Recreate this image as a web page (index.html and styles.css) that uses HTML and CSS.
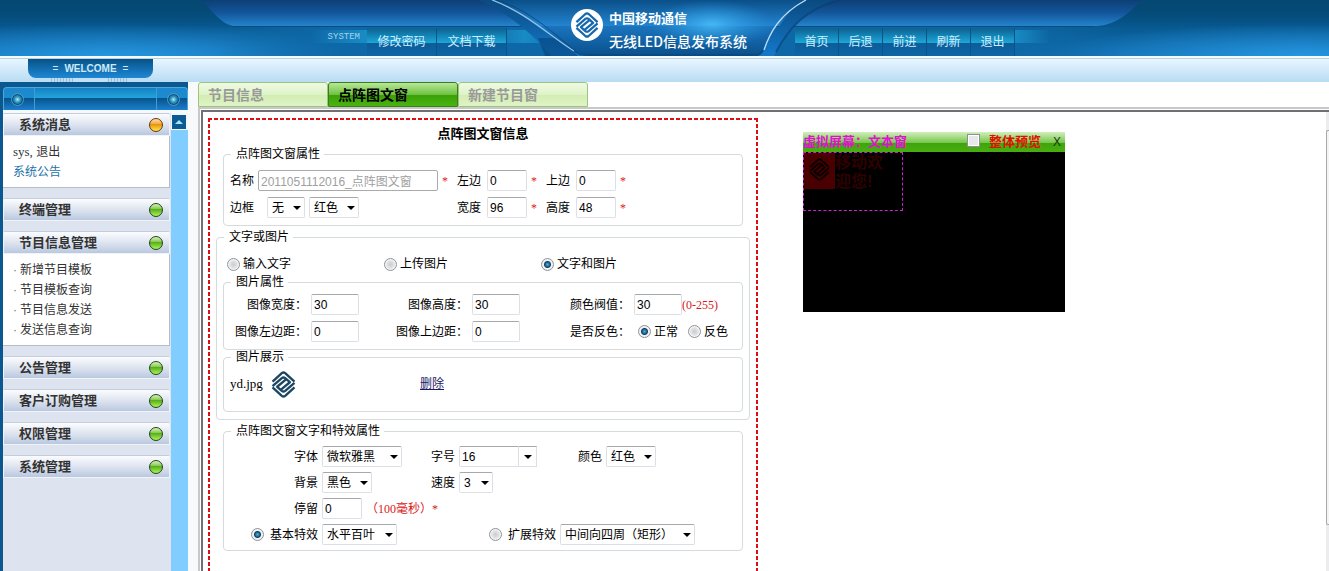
FILE: index.html
```html
<!DOCTYPE html>
<html lang="zh-CN">
<head>
<meta charset="utf-8">
<title>无线LED信息发布系统</title>
<link rel="stylesheet" href="styles.css">
</head>
<body>
<svg class="defs" aria-hidden="true">
  <symbol id="knot" viewBox="0 0 32 32">
    <g fill="none" stroke="currentColor" stroke-width="2.8" stroke-linejoin="round">
      <path d="M3 12.500 L14 2.500 Q16 1 18 2.500 L29 12.500"/>
      <path d="M3 18 L14 8.500 Q16 7 18 8.500 L23.500 13.300 L13 22"/>
      <path d="M29 19.500 L18 29.500 Q16 31 14 29.500 L3 19.500"/>
      <path d="M29 14 L18 23.500 Q16 25 14 23.500 L8.500 18.700 L19 10"/>
    </g>
  </symbol>
</svg>

<header class="top">
  <svg class="top-art" viewBox="0 0 1329 56" aria-hidden="true">
    <defs>
      <linearGradient id="wing" x1="0" y1="0" x2="0" y2="1">
        <stop offset="0" stop-color="#0d3f75"/><stop offset=".5" stop-color="#13569b"/><stop offset="1" stop-color="#2484cc"/>
      </linearGradient>
      <linearGradient id="shade" x1="0" y1="0" x2="0" y2="1">
        <stop offset="0" stop-color="#0a4a80"/><stop offset="1" stop-color="#1479cb"/>
      </linearGradient>
      <linearGradient id="plate" x1="0" y1="0" x2="0" y2="1">
        <stop offset="0" stop-color="#0a4f88"/><stop offset=".46" stop-color="#2384d0"/><stop offset=".47" stop-color="#1a74bd"/><stop offset="1" stop-color="#09508c"/>
      </linearGradient>
      <radialGradient id="glow"><stop offset="0" stop-color="#4cc4ff" stop-opacity=".8"/><stop offset="1" stop-color="#2a9be8" stop-opacity="0"/></radialGradient>
      <linearGradient id="rail" x1="0" y1="0" x2="1" y2="0">
        <stop offset="0" stop-color="#0e6ca8" stop-opacity="0"/><stop offset=".15" stop-color="#0e68a8"/><stop offset=".85" stop-color="#0e68a8"/><stop offset="1" stop-color="#0e6ca8" stop-opacity="0"/>
      </linearGradient>
      <linearGradient id="fade" x1="0" y1="0" x2="1" y2="0">
        <stop offset="0" stop-color="#1fa3d6" stop-opacity="0"/><stop offset=".5" stop-color="#1fa3d6" stop-opacity=".6"/><stop offset="1" stop-color="#1fa3d6" stop-opacity="0"/>
      </linearGradient>
    </defs>
    <rect x="210" y="27" width="910" height="29" fill="url(#rail)"/>
    <path d="M203 0 C213 13 222 24 233 26 H1094 C1112 26 1124 18 1142 0 Z" fill="url(#wing)"/>
    <path d="M233 26.500 H1094" stroke="#0b4b80"/>
    <rect x="310" y="30" width="110" height="13" fill="url(#fade)"/>
    <rect x="480" y="30" width="90" height="13" fill="url(#fade)"/>
    <rect x="980" y="30" width="70" height="13" fill="url(#fade)"/>
    <path d="M478 0 C510 14 530 32 552 56 H590 L500 0 Z" fill="url(#shade)"/>
    <path d="M838 0 C806 10 790 26 774 56 H755 L800 0 Z" fill="url(#shade)"/>
    <path d="M538 38 L560 38 L578 56 H545 Z" fill="#06427a" opacity=".6"/>
    <path d="M492 0 C525 12 550 36 572 50 Q578 56 590 56 H756 Q762 56 764 50 C770 32 780 14 806 0 Z" fill="url(#plate)"/>
    <ellipse cx="712" cy="24" rx="62" ry="24" fill="url(#glow)"/>
    <path d="M492 0 C525 12 550 36 574 51" fill="none" stroke="#8fc4ec" stroke-width="1.300"/>
    <path d="M496 0 C530 10 552 32 580 55 H758 L763 50" fill="none" stroke="#083e70" stroke-opacity=".7"/>
    <path d="M764 50 C770 32 780 14 806 0" fill="none" stroke="#b5dcf7" stroke-width="1.300"/>
    <path d="M838 0 C806 10 790 26 776 52" fill="none" stroke="#0a3e70" stroke-opacity=".6" stroke-width="2"/>
  </svg>
  <nav class="nav nav-left">
    <span class="nav-tag">SYSTEM</span>
    <a class="nav-link wide" href="#">修改密码</a>
    <a class="nav-link wide" href="#">文档下载</a>
  </nav>
  <div class="brand">
    <svg class="brand-logo" viewBox="0 0 32 32" aria-hidden="true"><circle cx="16" cy="16" r="16" fill="#fff"/><use href="#knot" x="3" y="3" width="26" height="26"/></svg>
    <div class="brand-text"><div class="brand-name">中国移动通信</div><div class="brand-sub">无线LED信息发布系统</div></div>
  </div>
  <nav class="nav nav-right">
    <a class="nav-link" href="#">首页</a>
    <a class="nav-link" href="#">后退</a>
    <a class="nav-link" href="#">前进</a>
    <a class="nav-link" href="#">刷新</a>
    <a class="nav-link" href="#">退出</a>
  </nav>
</header>

<div class="strip"><div class="welcome"><span>=</span><b>WELCOME</b><span>=</span></div></div>

<div class="body">
  <aside class="side">
    <div class="cap"><i class="knob"></i><i class="cap-mid"></i><i class="knob"></i></div>
    <div class="side-row">
      <div class="menu">
        <section>
          <h2 class="menu-head">系统消息<i class="led amber"></i></h2>
          <div class="menu-body"><div><span class="user">sys,</span> <a href="#">退出</a></div><div><a class="notice" href="#">系统公告</a></div></div>
        </section>
        <section><h2 class="menu-head">终端管理<i class="led"></i></h2></section>
        <section>
          <h2 class="menu-head">节目信息管理<i class="led"></i></h2>
          <ul class="menu-body dots">
            <li><a href="#">新增节目模板</a></li><li><a href="#">节目模板查询</a></li><li><a href="#">节目信息发送</a></li><li><a href="#">发送信息查询</a></li>
          </ul>
        </section>
        <section><h2 class="menu-head">公告管理<i class="led"></i></h2></section>
        <section><h2 class="menu-head">客户订购管理<i class="led"></i></h2></section>
        <section><h2 class="menu-head">权限管理<i class="led"></i></h2></section>
        <section><h2 class="menu-head">系统管理<i class="led"></i></h2></section>
      </div>
      <div class="rail"><button class="rail-up" type="button" aria-label="收起"><svg viewBox="0 0 14 14" aria-hidden="true"><path d="M3 9 L7 5 L11 9 Z" fill="#a8e4ff"/></svg></button></div>
    </div>
  </aside>

  <main class="main">
    <div class="tabs">
      <button class="tab" type="button">节目信息</button>
      <button class="tab active" type="button">点阵图文窗</button>
      <button class="tab" type="button">新建节目窗</button>
    </div>
    <div class="frame"><div class="page">
      <form class="panel">
        <h1 class="title">点阵图文窗信息</h1>

        <fieldset class="inset">
          <legend>点阵图文窗属性</legend>
          <div class="grid basics">
            <label for="name">名称</label>
            <div class="cell"><input class="box name" id="name" type="text" value="2011051112016_点阵图文窗" disabled><span class="req">*</span></div>
            <label for="left">左边</label>
            <div class="cell"><input class="box short" id="left" type="text" value="0"><span class="req">*</span></div>
            <label for="topv">上边</label>
            <div class="cell"><input class="box short" id="topv" type="text" value="0"><span class="req">*</span></div>
            <label for="border">边框</label>
            <div class="cell borders">
              <span class="pick p38"><select id="border"><option>无</option></select></span>
              <span class="pick p50"><select aria-label="边框颜色"><option>红色</option></select></span>
            </div>
            <label for="w">宽度</label>
            <div class="cell"><input class="box short" id="w" type="text" value="96"><span class="req">*</span></div>
            <label for="h">高度</label>
            <div class="cell"><input class="box short" id="h" type="text" value="48"><span class="req">*</span></div>
          </div>
        </fieldset>

        <fieldset class="outer">
          <legend>文字或图片</legend>
          <div class="modes">
            <label><input class="radio" type="radio" name="mode">输入文字</label>
            <label><input class="radio" type="radio" name="mode">上传图片</label>
            <label><input class="radio" type="radio" name="mode" checked>文字和图片</label>
          </div>
          <fieldset>
            <legend>图片属性</legend>
            <div class="grid image">
              <label for="iw">图像宽度：</label><input class="box" id="iw" type="text" value="30">
              <label for="ih">图像高度：</label><input class="box" id="ih" type="text" value="30">
              <label for="th">颜色阀值：</label>
              <div class="cell"><input class="box mid" id="th" type="text" value="30"><span class="hint">(0-255)</span></div>
              <label for="il">图像左边距：</label><input class="box" id="il" type="text" value="0">
              <label for="it">图像上边距：</label><input class="box" id="it" type="text" value="0">
              <span class="lab">是否反色：</span>
              <div class="cell invert">
                <label><input class="radio" type="radio" name="inv" checked>正常</label>
                <label><input class="radio" type="radio" name="inv">反色</label>
              </div>
            </div>
          </fieldset>
          <fieldset>
            <legend>图片展示</legend>
            <div class="shown">
              <span class="file">yd.jpg</span>
              <svg class="thumb" viewBox="0 0 32 32" aria-hidden="true"><use href="#knot"/></svg>
              <a class="del" href="#">删除</a>
            </div>
          </fieldset>
        </fieldset>

        <fieldset class="inset">
          <legend>点阵图文窗文字和特效属性</legend>
          <div class="grid effects">
            <label for="font">字体</label><span class="pick"><select id="font"><option>微软雅黑</option></select></span>
            <label for="size">字号</label><span class="combo"><input class="box" id="size" type="text" value="16"><button type="button" aria-label="选择字号"></button></span>
            <label for="color">颜色</label><span class="pick p50"><select id="color"><option>红色</option></select></span>
            <label class="first" for="bg">背景</label><span class="pick p50"><select id="bg"><option>黑色</option></select></span>
            <label for="speed">速度</label><span class="pick p34"><select id="speed"><option>3</option></select></span>
            <label class="first" for="stay">停留</label>
            <div class="stay"><input class="box short" id="stay" type="text" value="0"><span class="hint">（100毫秒）*</span></div>
          </div>
          <div class="motion">
            <label><input class="radio" type="radio" name="fx" checked>基本特效</label>
            <span class="pick p75"><select aria-label="基本特效"><option>水平百叶</option></select></span>
            <label class="ext"><input class="radio" type="radio" name="fx">扩展特效</label>
            <span class="pick p135"><select aria-label="扩展特效"><option>中间向四周（矩形）</option></select></span>
          </div>
        </fieldset>
      </form>

      <section class="preview">
        <div class="preview-bar">
          <span class="preview-title">虚拟屏幕：文本窗</span>
          <label class="whole"><input type="checkbox">整体预览</label>
          <button class="close" type="button" aria-label="关闭">X</button>
        </div>
        <div class="screen">
          <div class="sprite">
            <svg class="sprite-logo" viewBox="0 0 31 36" aria-hidden="true"><use href="#knot" x="4" y="4" width="23" height="25"/></svg>
            <p class="sprite-text">移动欢迎您!</p>
          </div>
        </div>
      </section>
      <div class="scroll"><i></i></div>
    </div></div>
  </main>
</div>
</body>
</html>
```
FILE: styles.css
```css
* { box-sizing: border-box; }
body {
  margin: 0; height: 100vh; overflow: hidden;
  display: flex; flex-direction: column;
  font: 12px/16px "Liberation Sans", "Noto Sans CJK SC", sans-serif;
  color: #000; background: #fff;
}
a { color: inherit; text-decoration: none; }
h1, h2, p, ul { margin: 0; padding: 0; list-style: none; }
.defs { position: absolute; width: 0; height: 0; }

/* Header */
.top {
  position: relative; flex: none; height: 56px;
  display: grid; grid-template-columns: 1fr 187px 1fr;
  background:
    linear-gradient(#054873, transparent 50%),
    radial-gradient(ellipse 280px 32px at 8% 100%, #2596e0, transparent),
    radial-gradient(ellipse 260px 32px at 98% 100%, #2596e0, transparent),
    linear-gradient(#044672, #07588f 45%, #126caf);
}
.top-art { position: absolute; left: 0; top: 0; width: 100%; height: 56px; }
.nav { position: relative; display: flex; align-items: flex-end; color: #cdeeff; }
.nav-left { justify-content: flex-end; padding-right: 64px; }
.nav-right { padding-left: 37px; }
.nav-tag { font: 9px/12px "Liberation Mono", monospace; color: #a4d3ee; padding: 0 7px 13px 0; }
.nav-link {
  width: 44px; height: 28px; line-height: 28px; text-align: center;
  background: linear-gradient(#0d5f92, #1ba8d8 15px, #0d5c98 15px, #0d66a6);
  border-right: 1px solid #0b5388;
}
.nav-link.wide { width: 70px; }
.brand { position: relative; display: flex; gap: 6px; color: #fff; }
.brand-logo { width: 32px; height: 32px; margin-top: 9px; color: #1668ad; flex: none; }
.brand-text { white-space: nowrap; }
.brand-name { font-size: 13px; font-weight: 700; line-height: 20px; margin-top: 9px; }
.brand-sub { font: 500 14px/24px "Noto Sans CJK SC", sans-serif; }

.strip {
  flex: none; height: 26px; padding: 3px 0 0 28px;
  background: linear-gradient(#f4fbff 2px, #b9cfdd 2px 3px, #e8f6ff 3px, #b8dcf3);
}
.welcome {
  position: relative; width: 125px; height: 19px;
  display: flex; justify-content: center; gap: 6px;
  font-size: 10px; line-height: 19px; color: #cdeaf8;
  border-radius: 0 0 8px 8px; background: linear-gradient(#075287, #1f88d6);
}
.welcome::after {
  content: ""; position: absolute; left: 23px; right: 24px; top: 19px; height: 4px;
  background:
    linear-gradient(90deg, transparent 22px, #c2e1f5 22px calc(100% - 22px), transparent calc(100% - 22px)),
    repeating-linear-gradient(90deg, #9dbdd2 0 1px, transparent 1px 3px);
}

.body { flex: 1; min-height: 0; display: flex; }

/* Sidebar */
.side { flex: none; width: 188px; padding: 5px 0 0 3px; background: #0b5890; display: flex; flex-direction: column; }
.cap {
  flex: none; height: 23px; display: flex; align-items: center; justify-content: space-between; padding: 0 8px;
  border: 1px solid #4ba8dc; border-bottom: 0; border-radius: 4px 4px 0 0;
  background: linear-gradient(#1e86cc, #1b8cd0 10px, #075188 10px, #1c7fce);
}
.cap-mid {
  width: 123px; height: 22px; border: 1px solid #3f9fd2; border-width: 0 1px;
  background: linear-gradient(#1680c0, #22a4dc 10px, #07548c 10px, #1a80cc);
}
.knob { width: 11px; height: 11px; border: 1px solid #0a4a78; border-radius: 50%; background: radial-gradient(circle, #9ff0f4, #2a8cb8 50%, #0d5688); outline: 1px solid #4a9cc8; }
.side-row { flex: 1; min-height: 0; display: flex; border-top: 3px solid #f6f9fc; background: #dde3ef; }
.menu { flex: 1; display: flex; flex-direction: column; gap: 10px; padding-right: 1px; }
.menu-head {
  height: 23px; padding: 0 6px 0 15px; display: flex; align-items: center; justify-content: space-between;
  font-size: 13px; line-height: 20px; font-weight: 700; color: #333;
  border: 1px solid #f0f3f8; border-top-color: #c3cddb; border-radius: 2px 2px 0 0;
  background: linear-gradient(#fbfcfe, #dbe2ee 55%, #b9c8e0);
}
.led {
  width: 14px; height: 14px; border: 1px solid #23421c; border-radius: 50%;
  background: linear-gradient(#d9f2c0, #7cc63e 45%, #58ad1e 45%, #a9f552);
}
.led.amber { border-color: #6a3206; background: linear-gradient(#fbe0a8, #f3a53a 45%, #e8920e 45%, #ffe84a); }
.menu-body { padding: 6px 10px 5px; border: solid #b5bdc8; border-width: 0 1px 1px 0; background: #fff; line-height: 20px; color: #333; }
.user { font: 13px/20px "Liberation Serif", serif; }
.notice { color: #2272a8; }
.dots li { display: flex; }
.dots li::before { content: "·"; width: 7px; color: #678; }
.rail { flex: none; width: 17px; background: linear-gradient(#f1f6fa 17px, #82cdff 17px); padding-top: 2px; }
.rail-up { display: block; width: 14px; height: 14px; margin-left: 1px; padding: 0; border: 0; background: #0b5b92; }
.rail-up svg { display: block; width: 14px; height: 14px; }

/* Tabs and page frame */
.main { flex: 1; min-width: 0; display: flex; flex-direction: column; padding-left: 10px; background: linear-gradient(90deg, #f8f9fb 10px, #fff 10px); }
.tabs { flex: none; display: flex; }
.tab {
  width: 130px; height: 25px; padding: 0 9px; text-align: left;
  font: 700 14px/22px "Liberation Sans", "Noto Sans CJK SC", sans-serif; color: #999;
  border: 1px solid #9cc47c; border-radius: 3px 3px 0 0;
  background: linear-gradient(#f0fae4, #def3c8 50%, #d2edb2 50%, #dff3c6);
}
.tab.active { color: #000; border-color: #3b7d1c; background: linear-gradient(#b9e79a, #6fc340 50%, #3c9f08 50%, #48b410); }
.frame { flex: 1; min-height: 0; display: flex; border: solid #c8c8c8; border-width: 2px 0 0 2px; padding: 1px 0 0 1px; }
.page { flex: 1; min-width: 0; display: flex; align-items: flex-start; border: solid #707074; border-width: 2px 0 0 2px; padding: 6px 0 0 5px; }
.scroll { align-self: stretch; width: 3px; margin: -6px 0 0 auto; padding: 18px 0 46px; background: #ececee; display: flex; }
.scroll i { flex: 1; border: 1px solid #a8a8ac; border-right: 0; border-radius: 2px 0 0 2px; background: #f4f4f4; }

/* Form */
.panel {
  flex: 0 1 550px; align-self: stretch; padding: 2px 8px 0;
  background:
    repeating-linear-gradient(90deg, #dc0f14 0 4px, transparent 4px 6px) top / 100% 2px no-repeat,
    repeating-linear-gradient(#dc0f14 0 4px, transparent 4px 6px) left / 2px 100% no-repeat,
    repeating-linear-gradient(#dc0f14 0 4px, transparent 4px 6px) right / 2px 100% no-repeat;
}
.title { font-size: 13px; line-height: 27px; text-align: center; }
fieldset { margin: 0; min-width: 0; padding: 0; border: 1px solid #d5dadd; border-radius: 4px; }
legend { margin-left: 7px; padding: 0 4px 0 5px; line-height: 14px; }
.inset { margin: 0 7px; }
.outer { margin: 4px 0; padding: 0 6px 7px; }
.outer > legend { margin-left: 1px; }
.outer > fieldset > legend { margin-left: 7px; }
.grid { display: grid; align-items: center; }
.cell { display: flex; align-items: center; }
.basics { grid-template-columns: 28px 199px 30px 59px 30px 1fr; row-gap: 6px; padding: 9px 0 7px 6px; }
.box {
  width: 100%; height: 21px; padding: 0 2px; border: 1px solid #dcdfe6; border-top-color: #a5a8ad; border-radius: 2px;
  font: 12px/18px "Liberation Sans", "Noto Sans CJK SC", sans-serif; color: #000; background: #fff;
}
.box.name { width: 180px; color: #a0a0a0; border-color: #aaa; }
.box.short { width: 40px; }
.box.mid { width: 48px; }
.req { margin-left: 4px; font: 12px/16px "Liberation Serif", serif; color: #e02020; }
.hint { font: 12px/16px "Liberation Serif", "Noto Sans CJK SC", serif; color: #d81818; }
.borders { padding-left: 9px; gap: 4px; }

.pick { position: relative; display: block; width: 80px; }
.pick select {
  appearance: none; display: block; width: 100%; height: 21px; padding: 0 4px; border: 1px solid #dcdfe6; border-top-color: #a5a8ad; border-radius: 2px;
  font: 12px/18px "Liberation Sans", "Noto Sans CJK SC", sans-serif; color: #000; background: #fff;
}
.pick::after, .combo button::after { content: ""; border: solid transparent; border-width: 4px 4px 0; border-top-color: #000; }
.pick::after { position: absolute; right: 4px; top: 9px; pointer-events: none; }
.p34 { width: 34px; } .p38 { width: 38px; } .p50 { width: 50px; } .p75 { width: 75px; } .p135 { width: 135px; }

.radio {
  appearance: none; flex: none; width: 13px; height: 13px; margin: 0 3px 0 0; border: 1px solid #8f9296; border-radius: 50%;
  background: radial-gradient(circle, #c9cccf, #e4e6e8 4px, #f6f6f6 5px);
}
.radio:checked { background: radial-gradient(circle at 50% 50%, #55b4dc, #0f3f66 3px, #0f3f66 3px, #eef2f5 4px); }
.modes { display: grid; grid-template-columns: 157px 157px 1fr; padding: 9px 0 0 4px; line-height: 22px; }
.modes label, .invert label, .motion label { display: flex; align-items: center; }
.image { grid-template-columns: 87px 48px 113px 48px 114px 1fr; row-gap: 6px; padding: 5px 0 7px; }
.image > label, .lab { text-align: right; padding-right: 4px; }
.invert { gap: 10px; padding-left: 4px; }
.shown { display: flex; align-items: center; height: 30px; margin: 5px 0 12px 6px; }
.file { width: 40px; font: 13px/16px "Liberation Serif", serif; }
.thumb { width: 27px; height: 27px; color: #1c4763; }
.del { margin-left: 123px; color: #1a1a66; text-decoration: underline; }

.effects { grid-template-columns: 98px 80px 57px 78px 69px 1fr; row-gap: 5px; padding: 8px 0 5px; }
.effects label { text-align: right; padding-right: 4px; }
.effects .first { grid-column: 1; }
.combo { display: flex; }
.combo .box { flex: 1; min-width: 0; border-radius: 2px 0 0 2px; }
.combo button { width: 18px; height: 21px; padding: 0; display: flex; align-items: center; justify-content: center; border: 1px solid #dcdfe6; border-left: 0; border-top-color: #a5a8ad; background: #fff; }
.stay { grid-column: 2 / -1; display: flex; align-items: center; gap: 4px; }
.motion { display: flex; align-items: center; padding: 0 0 5px 27px; }
.motion label { padding-right: 4px; }
.motion .radio { margin-right: 6px; }
.motion .ext { margin-left: 92px; }

/* Virtual screen */
.preview { flex: none; width: 262px; margin: 14px 0 0 45px; background: #000; }
.preview-bar {
  display: flex; align-items: center; height: 20px; font-size: 13px; font-weight: 700;
  background: linear-gradient(#d2efbc, #74c548 55%, #3ea40c 55%, #48ae10);
}
.preview-title { color: #e010d0; }
.whole { display: flex; align-items: center; gap: 9px; margin-left: auto; color: #e01000; }
.whole input { appearance: none; width: 13px; height: 13px; margin: 0 0 4px; border: 1px solid #8c8f94; background: #e6e8ea; box-shadow: inset 0 0 0 1px #fff; }
.close { width: 24px; padding: 0 0 0 8px; border: 0; background: none; font: 12px/16px "Liberation Sans", sans-serif; color: #173a0a; }
.screen { height: 160px; }
.sprite { display: flex; align-items: flex-start; width: 100px; height: 59px; border: 1px dashed #c828c8; }
.sprite-logo { flex: none; width: 31px; height: 36px; color: #0c0000; background: #4a0000; }
.sprite-text { font-size: 16px; line-height: 19px; font-weight: 700; color: #300000; width: 52px; }
```
